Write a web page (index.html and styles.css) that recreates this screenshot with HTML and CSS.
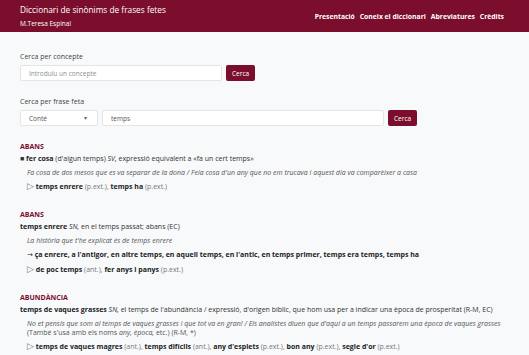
FILE: index.html
```html
<!DOCTYPE html>
<html lang="ca">
<head>
    <meta charset="UTF-8">
    <title>Diccionari de sinònims de frases fetes</title>
    <link rel="stylesheet" href="styles.css">
</head>
<body>
    <header class="topbar">
        <div class="brand">
            <div class="brand-title">Diccionari de sinònims de frases fetes</div>
            <div class="brand-sub">M.Teresa Espinal</div>
        </div>
        <nav class="menu">
            <a href="#">Presentació</a>
            <a href="#">Coneix el diccionari</a>
            <a href="#">Abreviatures</a>
            <a href="#">Crèdits</a>
        </nav>
    </header>

    <main class="content">
        <section class="search">
            <label class="search-label">Cerca per concepte</label>
            <div class="search-row">
                <input class="field field-concept" type="text" placeholder="Introduïu un concepte">
                <button class="btn">Cerca</button>
            </div>
        </section>

        <section class="search">
            <label class="search-label">Cerca per frase feta</label>
            <div class="search-row">
                <div class="field field-select">Conté <span class="caret">▾</span></div>
                <input class="field field-phrase" type="text" value="temps">
                <button class="btn">Cerca</button>
            </div>
        </section>

        <section class="entry">
            <h2 class="concept">ABANS</h2>
            <p class="head"><span class="square">■</span> <b>fer cosa</b> (d'algun temps) <i>SV,</i> expressió equivalent a «fa un cert temps»</p>
            <p class="example">Fa cosa de dos mesos que es va separar de la dona / Feia cosa d'un any que no em trucava i aquest dia va comparèixer a casa</p>
            <p class="rel"><span class="tri">▷</span> <b>temps enrere</b> (p.ext.), <b>temps ha</b> (p.ext.)</p>
        </section>

        <section class="entry">
            <h2 class="concept">ABANS</h2>
            <p class="head"><b>temps enrere</b> <i>SN,</i> en el temps passat; abans (EC)</p>
            <p class="example">La història que t'he explicat és de temps enrere</p>
            <p class="rel syn"><span class="arrow">→</span> <b>ça enrere, a l'antigor, en altre temps, en aquell temps, en l'antic, en temps primer, temps era temps, temps ha</b></p>
            <p class="rel"><span class="tri">▷</span> <b>de poc temps</b> (ant.), <b>fer anys i panys</b> (p.ext.)</p>
        </section>

        <section class="entry">
            <h2 class="concept">ABUNDÀNCIA</h2>
            <p class="head"><b>temps de vaques grasses</b> <i>SN,</i> el temps de l'abundància / expressió, d'origen bíblic, que hom usa per a indicar una època de prosperitat (R-M, EC)</p>
            <p class="example">No et pensis que som al temps de vaques grasses i que tot va en gran! / Els analistes diuen que d'aquí a un temps passarem una època de vaques grasses<br><span class="note">(També s'usa amb els noms <i>any, època,</i> etc.) (R-M, *)</span></p>
            <p class="rel"><span class="tri">▷</span> <b>temps de vaques magres</b> (ant.), <b>temps difícils</b> (ant.), <b>any d'esplets</b> (p.ext.), <b>bon any</b> (p.ext.), <b>segle d'or</b> (p.ext.)</p>
        </section>
    </main>
</body>
</html>
```

FILE: styles.css
```css
body {
    margin: 0;
    background-color: #f8f9fa;
    font-family: "Open Sans", sans-serif;
    color: #212529;
    font-size: 7px;
}

/* barra superior */
.topbar {
    background-color: #7a0e2c;
    height: 32px;
    padding: 0 20px;
    display: flex;
    justify-content: space-between;
    align-items: center;
    color: white;
}

.brand-title {
    font-size: 8.3px;
    line-height: 12px;
}

.brand-sub {
    font-size: 6.5px;
    line-height: 9px;
    margin-top: 3px;
}

.menu {
    display: flex;
    gap: 5px;
    margin-right: 5px;
}

.menu a {
    color: white;
    text-decoration: none;
    font-weight: 700;
    font-size: 6.8px;
}

/* cercadors */
.content {
    padding: 20px 20px 0;
}

.search {
    margin-bottom: 16px;
}

.search-label {
    display: block;
    font-size: 7px;
    color: #444;
    margin-bottom: 4px;
}

.search-row {
    display: flex;
    gap: 3px;
    align-items: center;
}

.field {
    box-sizing: border-box;
    height: 16px;
    background: white;
    border: 1px solid #e3e5e8;
    border-radius: 2px;
    padding: 0 8px;
    font-family: inherit;
    font-size: 6.5px;
    color: #555;
    outline: none;
}

.field::placeholder {
    color: #8a8f94;
}

.field-concept {
    width: 202px;
}

.field-select {
    width: 78px;
    display: flex;
    align-items: center;
    justify-content: space-between;
}

.caret {
    font-size: 6px;
    color: #666;
    margin-right: 2px;
}

.field-phrase {
    width: 282px;
    margin-left: 1px;
}

.btn {
    box-sizing: border-box;
    height: 16px;
    padding: 0 6px;
    margin-left: 1px;
    background-color: #7a0e2c;
    color: white;
    border: none;
    border-radius: 2px;
    font-family: inherit;
    font-size: 6.5px;
}

/* resultats */
.entry {
    margin-top: 13px;
}

.entry + .entry {
    margin-top: 19px;
}

.concept {
    margin: 0 0 3px;
    font-size: 7px;
    font-weight: 700;
    color: #7a0e2c;
}

.entry p {
    margin: 0;
    line-height: 9px;
    color: #333;
}

.entry b {
    color: #222;
}

.entry .head {
    margin-bottom: 5px;
}

.square {
    font-size: 7px;
}

.example {
    padding-left: 7px;
    font-style: italic;
    color: #555 !important;
    margin-bottom: 5px !important;
}

.example .note {
    font-style: normal;
}

.entry .rel {
    padding-left: 7px;
    color: #777;
    margin-bottom: 5px;
}

.tri {
    font-family: "DejaVu Sans", sans-serif;
    font-size: 9px;
    line-height: 7px;
    color: #777;
}

.arrow {
    font-family: "DejaVu Sans", sans-serif;
    color: #222;
}

.entry .syn {
    color: #222;
}
```
